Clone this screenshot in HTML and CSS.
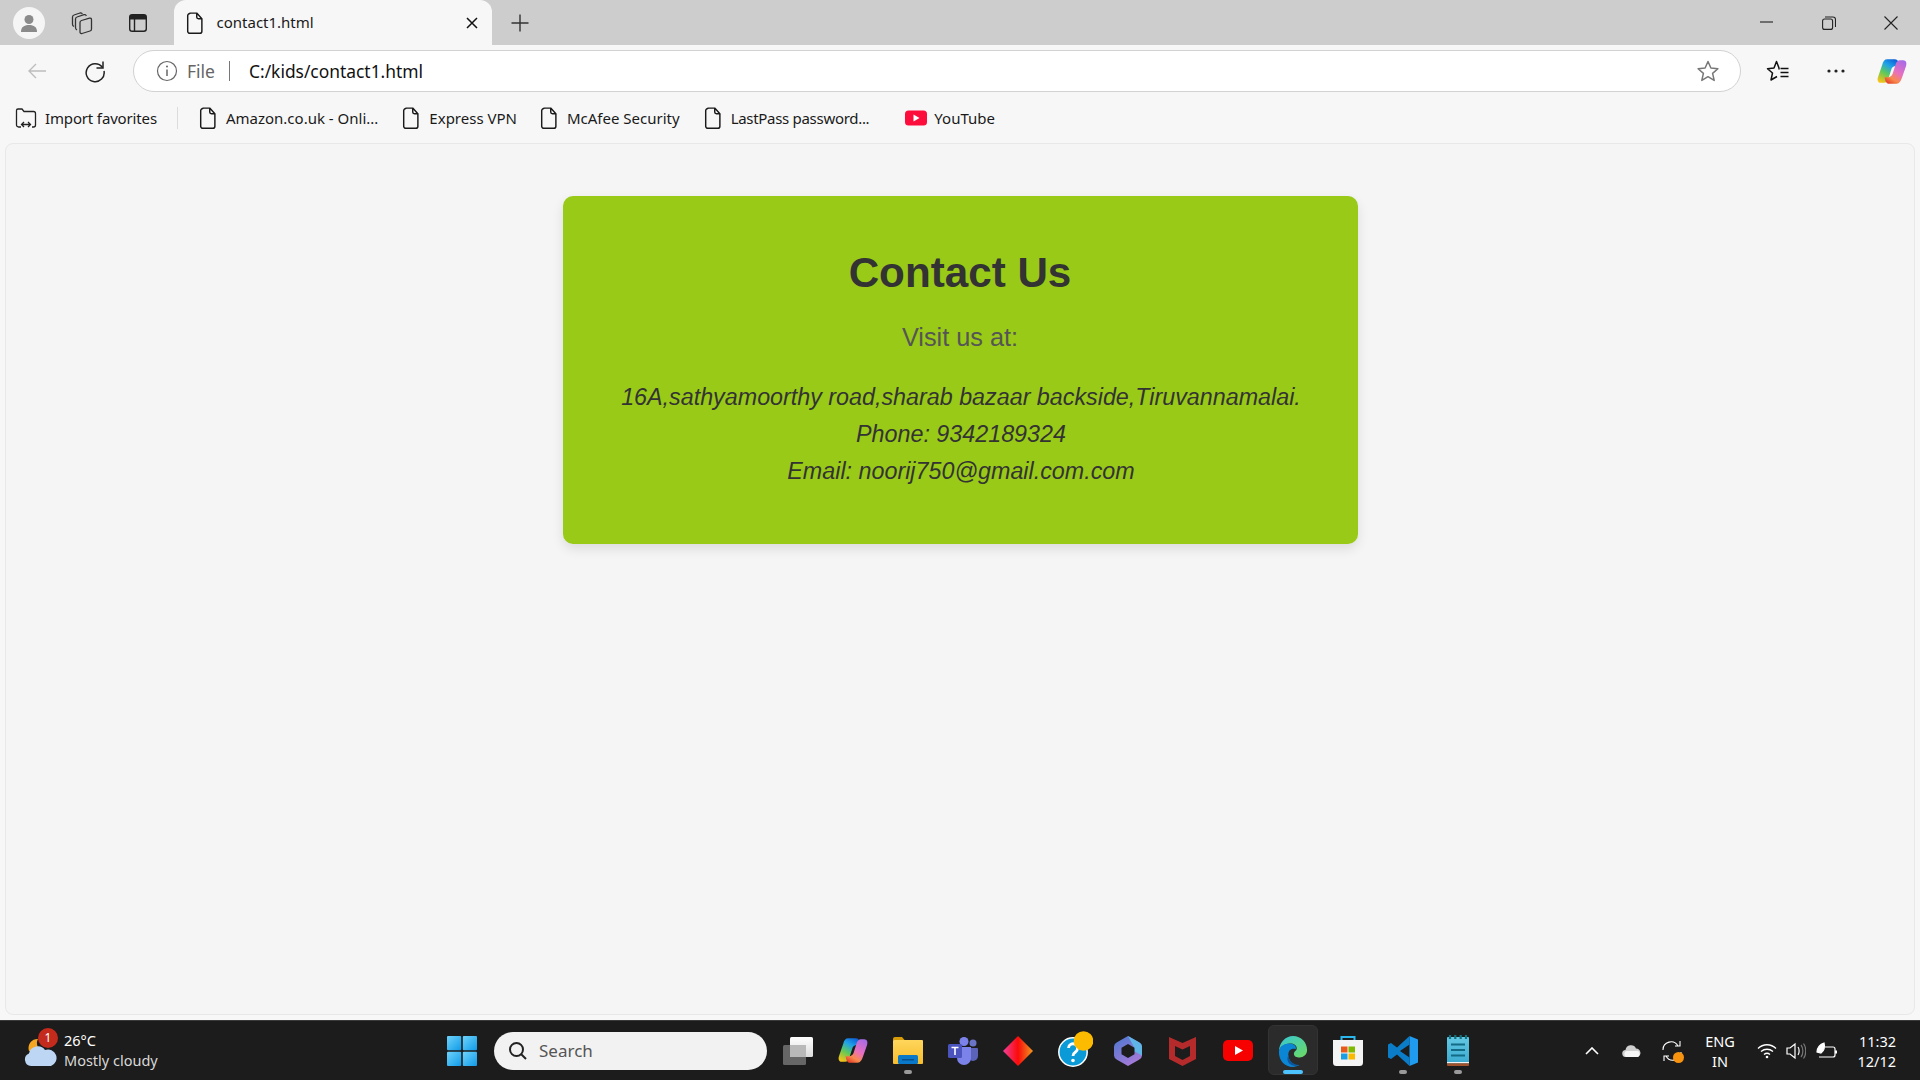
FILE: index.html
```html
<!DOCTYPE html>
<html lang="en">
<head>
<meta charset="utf-8">
<title>contact1.html</title>
<link rel="stylesheet" href="styles.css">
</head>
<body>
<svg class="defs" width="0" height="0" aria-hidden="true">
  <defs>
    <symbol id="file" viewBox="0 0 20 26"><path d="M4 1.5h8l6 6.5v14.500a2.500 2.500 0 0 1-2.500 2.500h-11.500a2.500 2.500 0 0 1-2.500-2.500v-18a2.500 2.500 0 0 1 2.500-2.500zM12 1.500v4.500a2 2 0 0 0 2 2h4" fill="none" stroke="currentColor" stroke-width="1.700" stroke-linejoin="round"/></symbol>
    <linearGradient id="cp" x1=".75" y1="0" x2=".2" y2="1"><stop offset="0" stop-color="#0f62d8"/><stop offset=".3" stop-color="#1fa2e8"/><stop offset=".62" stop-color="#5fc95a"/><stop offset="1" stop-color="#f7c316"/></linearGradient>
    <linearGradient id="cp2" x1=".85" y1="0" x2=".25" y2="1"><stop offset="0" stop-color="#a56be8"/><stop offset=".5" stop-color="#e86fc0"/><stop offset=".8" stop-color="#f88a4c"/><stop offset="1" stop-color="#e8482c"/></linearGradient>
    <symbol id="copilot" viewBox="0 0 32 28"><path d="M11 1h8c2 0 3 1 4 3l1 4h-4c-2 0-3.500 1-4.500 3l-3.500 11c-.7 2-2 4-4.500 4H4c-3 0-4-3-3-6L5.500 7C6.500 3 8 1 11 1z" fill="url(#cp)"/><path d="M21 27h-8c-2 0-3-1-4-3l-1-4h4c2 0 3.500-1 4.500-3l3.500-11c.7-2 2-4 4.500-4H28c3 0 4 3 3 6l-4.500 13c-1 3-2.500 6-5.500 6z" fill="url(#cp2)"/></symbol>
    <linearGradient id="dm" x1="0" y1="0" x2="1" y2="0"><stop offset="0" stop-color="#f0409c"/><stop offset=".5" stop-color="#fb0a0a"/><stop offset="1" stop-color="#f09a20"/></linearGradient>
    <linearGradient id="edge" x1="0" y1="0" x2="1" y2="1"><stop offset="0" stop-color="#36c6d8"/><stop offset="1" stop-color="#6ddc5f"/></linearGradient>
    <linearGradient id="m365" x1="0" y1="0" x2=".6" y2="1"><stop offset="0" stop-color="#4a78d0"/><stop offset="1" stop-color="#a57ad8"/></linearGradient>
    <linearGradient id="fold" x1="0" y1="0" x2="0" y2="1"><stop offset="0" stop-color="#ffd65c"/><stop offset="1" stop-color="#f7bd2c"/></linearGradient>
    <linearGradient id="win" x1="0" y1="0" x2="1" y2="1"><stop offset="0" stop-color="#6fd3fb"/><stop offset="1" stop-color="#0f9be8"/></linearGradient>
    <linearGradient id="tv" x1="0" y1="0" x2="0" y2="1"><stop offset="0" stop-color="#fff"/><stop offset="1" stop-color="#dcdcdc"/></linearGradient>
    <linearGradient id="note" x1="0" y1="0" x2="0" y2="1"><stop offset="0" stop-color="#63c8e4"/><stop offset="1" stop-color="#3aa9cf"/></linearGradient>
  </defs>
</svg>

<div class="browser">
  <header class="tabstrip">
    <span class="avatar"><svg width="22" height="22" viewBox="0 0 22 22"><circle cx="11" cy="7.500" r="4.500" fill="#8a8a8a"/><path d="M3 20c0-5 3-7 8-7s8 2 8 7z" fill="#8a8a8a"/></svg></span>
    <span class="strip-btn collections"><svg width="24" height="24" viewBox="0 0 24 24" fill="none" stroke="#333" stroke-width="1.300" stroke-linejoin="round"><path d="M10 11.500c0-1 .5-1.700 1.500-2l8-2.300c1.200-.3 2 .3 2 1.500V18c0 1-.5 1.700-1.500 2l-8 2.500c-1.200.3-2-.3-2-1.500z"/><path d="M7 19c-1-.5-1.500-1.300-1.500-2.500V8c0-1 .5-1.700 1.500-2l7-2.300c1.200-.3 2 .1 2.300 1.300"/><path d="M4 15.500c-1-.5-1.500-1.200-1.500-2.300V6c0-1 .5-1.700 1.500-2l6-2c1.200-.3 2 .1 2.300 1"/></svg></span>
    <span class="strip-btn tabs-btn"><svg width="22" height="22" viewBox="0 0 22 22"><rect x="2.700" y="2.700" width="16.600" height="16.600" rx="2.500" fill="none" stroke="#222" stroke-width="1.400"/><path d="M2.700 5a2.300 2.300 0 0 1 2.300-2.300h12a2.300 2.300 0 0 1 2.300 2.300v2.500H2.700z" fill="#222"/><path d="M7.500 7v12" stroke="#222" stroke-width="1.400"/></svg></span>
    <div class="tab">
      <svg class="ico-file" width="20" height="26"><use href="#file"/></svg>
      <span class="tab-title">contact1.html</span>
      <svg class="tab-close" width="12" height="12" viewBox="0 0 12 12"><path d="M1 1l10 10M11 1L1 11" stroke="#111" stroke-width="1.500"/></svg>
    </div>
    <svg class="new-tab" width="20" height="20" viewBox="0 0 20 20"><path d="M10 1.500v17M1.500 10h17" stroke="#333" stroke-width="1.400"/></svg>
    <div class="window-controls">
      <svg width="14" height="14" viewBox="0 0 14 14"><path d="M0 6h13" stroke="#222" stroke-width="1.100"/></svg>
      <svg width="14" height="14" viewBox="0 0 14 14" fill="none" stroke="#222" stroke-width="1.100"><rect x=".6" y="3" width="10" height="10.400" rx="2"/><path d="M3 1h8c1.500 0 2.500 1 2.500 2.500v7.500"/></svg>
      <svg width="14" height="14" viewBox="0 0 14 14"><path d="M.5.500l13 13M13.500.500l-13 13" stroke="#222" stroke-width="1.100"/></svg>
    </div>
  </header>

  <div class="toolbar">
    <svg class="tool-back" width="20" height="20" viewBox="0 0 20 20" fill="none" stroke="#bdbdbd" stroke-width="1.400"><path d="M19 10H2M9 3l-7 7 7 7"/></svg>
    <svg class="tool-reload" width="24" height="24" viewBox="0 0 24 24" fill="none" stroke="#222" stroke-width="1.500"><path d="M19.500 8.500A9 9 0 1 0 21 12"/><path d="M20 2.500v6.500h-6.500"/></svg>
    <div class="omnibox">
      <svg class="info" width="22" height="22" viewBox="0 0 22 22" fill="none" stroke="#666" stroke-width="1.200"><circle cx="11" cy="11" r="9.500"/><path d="M11 9.500v6.500" stroke-width="1.500"/><circle cx="11" cy="6.500" r="1" fill="#666" stroke="none"/></svg>
      <span class="scheme">File</span>
      <span class="omni-sep"></span>
      <span class="url">C:/kids/contact1.html</span>
      <svg class="star" width="24" height="24" viewBox="0 0 24 24" fill="none" stroke="#777" stroke-width="1.500" stroke-linejoin="round"><path d="M12 2.500l2.900 6.500 7 .7-5.300 4.700 1.600 7-6.200-3.700-6.200 3.700 1.600-7-5.300-4.700 7-.7z"/></svg>
    </div>
    <svg class="tool-fav" width="24" height="24" viewBox="0 0 24 24" fill="none" stroke="#111" stroke-width="1.500" stroke-linejoin="round"><path d="M13 10.500V9l-2.500-6.500L8 9l-6.500.7 5 4.300-1.500 7L11 17.500"/><path d="M14.500 9.500h8M14.500 13.500h8M14.500 17.500h8"/></svg>
    <svg class="tool-more" width="18" height="6" viewBox="0 0 18 6" fill="#222"><circle cx="2" cy="3" r="1.600"/><circle cx="9" cy="3" r="1.600"/><circle cx="16" cy="3" r="1.600"/></svg>
    <svg class="tool-copilot" width="30" height="27"><use href="#copilot"/></svg>
  </div>

  <nav class="bookmarks">
    <span class="bm bm-import"><svg width="22" height="22" viewBox="0 0 22 22" fill="none" stroke="#222" stroke-width="1.300"><path d="M6 20H3.500A2 2 0 0 1 1.500 18V3.500A1.500 1.500 0 0 1 3 2h4l2 2.500h9.500a2 2 0 0 1 2 2V18a2 2 0 0 1-2 2H17"/><path d="M7 17.500h8M9 15l-2.500 2.500L9 20M13 15l2.500 2.500L13 20"/></svg>Import favorites</span>
    <span class="bm-sep"></span>
    <span class="bm bm-amazon"><svg class="ico-file" width="20" height="26"><use href="#file"/></svg>Amazon.co.uk - Onli...</span>
    <span class="bm bm-express"><svg class="ico-file" width="20" height="26"><use href="#file"/></svg>Express VPN</span>
    <span class="bm bm-mcafee"><svg class="ico-file" width="20" height="26"><use href="#file"/></svg>McAfee Security</span>
    <span class="bm bm-lastpass"><svg class="ico-file" width="20" height="26"><use href="#file"/></svg>LastPass password...</span>
    <span class="bm bm-youtube"><svg width="22" height="16" viewBox="0 0 22 16"><rect width="22" height="15" y=".5" rx="3.500" fill="#fd0d3c"/><path d="M8.500 4.500l6 3.500-6 3.500z" fill="#fff"/></svg>YouTube</span>
  </nav>

  <main class="viewport">
    <section class="card">
      <h1 class="card-title">Contact Us</h1>
      <p class="card-lead">Visit us at:</p>
      <address class="card-address">
        <p>16A,sathyamoorthy road,sharab bazaar backside,Tiruvannamalai.</p>
        <p>Phone: 9342189324</p>
        <p>Email: noorij750@gmail.com.com</p>
      </address>
    </section>
  </main>
</div>

<footer class="taskbar">
  <div class="weather">
    <span class="weather-icon">
      <svg width="34" height="36" viewBox="0 0 34 36"><path d="M6 18a9 9 0 0 1 9-12 8 8 0 0 0 6 12z" fill="#f5a623"/><path d="M8 33a6.500 6.500 0 0 1-2-12.500A9 9 0 0 1 22 17a7.500 7.500 0 0 1 6 16z" fill="#bcd6f4"/></svg>
      <span class="badge">1</span>
    </span>
    <span class="weather-text"><span class="temp">26°C</span><span class="cond">Mostly cloudy</span></span>
  </div>
  <div class="apps">
    <span class="app start"><svg width="30" height="30" viewBox="0 0 30 30" fill="url(#win)"><rect width="14.200" height="14.200" rx="1"/><rect x="15.800" width="14.200" height="14.200" rx="1"/><rect y="15.800" width="14.200" height="14.200" rx="1"/><rect x="15.800" y="15.800" width="14.200" height="14.200" rx="1"/></svg></span>
    <label class="search"><svg width="20" height="20" viewBox="0 0 20 20" fill="none" stroke="#222" stroke-width="2"><circle cx="8.500" cy="8.500" r="6.500"/><path d="M13 13l5 5"/></svg><span>Search</span></label>
    <span class="app"><svg width="30" height="28" viewBox="0 0 30 28"><rect y="8" width="23" height="20" rx="1.500" fill="#666"/><rect x="7" width="23" height="20" rx="1.500" fill="url(#tv)"/><rect x="7" y="8" width="16" height="12" fill="#b9b9b9"/></svg></span>
    <span class="app"><svg width="30" height="27"><use href="#copilot"/></svg></span>
    <span class="app running"><svg width="30" height="27" viewBox="0 0 30 27"><path d="M0 2a2 2 0 0 1 2-2h7l3 3.500H0z" fill="#d89c08"/><rect y="3" width="30" height="24" rx="1" fill="url(#fold)"/><rect x="5" y="18" width="20" height="9" rx="1.500" fill="#0a78c8"/><rect x="9" y="22" width="12" height="1.500" fill="#04508c"/></svg></span>
    <span class="app"><svg width="30" height="28" viewBox="0 0 30 28"><circle cx="25" cy="6" r="3.500" fill="#6a75c9"/><path d="M20 11h9a1 1 0 0 1 1 1v7a5 5 0 0 1-10 0z" fill="#5a63b8"/><circle cx="16" cy="4.500" r="4.500" fill="#7b83eb"/><path d="M9 10h14v11a7 7 0 0 1-14 0z" fill="#7b83eb"/><rect y="7" width="14" height="14" rx="1.500" fill="#4b53bc"/><path d="M3.500 10.500h7M7 10.500v7.500" stroke="#fff" stroke-width="1.600"/></svg></span>
    <span class="app"><svg width="30" height="30" viewBox="0 0 30 30"><path d="M15 0l15 15-15 15L0 15z" fill="url(#dm)"/></svg></span>
    <span class="app"><svg class="help" width="40" height="44" viewBox="0 0 40 44"><circle cx="20" cy="25" r="14.200" fill="#0a9ad8" stroke="#fff" stroke-width="1.500"/><path d="M15.500 21a4.500 4.500 0 1 1 7 4c-1.500 1-2.500 2-2.500 4" fill="none" stroke="#fff" stroke-width="2.800"/><circle cx="20" cy="33.500" r="1.800" fill="#fff"/><circle cx="30.500" cy="14" r="9.800" fill="#fdbb00"/></svg></span>
    <span class="app"><svg width="28" height="30" viewBox="0 0 28 30"><path d="M14 0l11 6.200a5 5 0 0 1 3 4.300v9a5 5 0 0 1-3 4.300L14 30 3 23.800a5 5 0 0 1-3-4.300v-9a5 5 0 0 1 3-4.300z" fill="url(#m365)"/><path d="M14 0l11 6.200a5 5 0 0 1 3 4.300v9L20 15v-4z" fill="#5fb6e6"/><path d="M14 8l6.500 3.700v6.600L14 22l-6.500-3.700v-6.600z" fill="#1c1c1c"/></svg></span>
    <span class="app"><svg width="27" height="30" viewBox="0 0 27 30"><path d="M0 1l13.500 6L27 1v22l-13.500 7L0 23z" fill="#b52b2b"/><path d="M6 10l7.500 3.500L21 10v10l-7.500 4L6 20z" fill="#1c1c1c"/></svg></span>
    <span class="app"><svg width="30" height="21" viewBox="0 0 30 21"><rect width="30" height="21" rx="5" fill="#f60000"/><path d="M12 6l8 4.500-8 4.500z" fill="#fff"/></svg></span>
    <span class="app active"><svg width="30" height="32" viewBox="0 0 32 34"><path d="M1 18C1 8 8 1 16 1c9 0 15 7 15 15 0 5-4 8-8 8-3 0-6-1-6-4 0-3 3-3 3-6 0-3-3-5-7-5-7 0-12 5-12 9z" fill="url(#edge)"/><path d="M1 18c0-6 6-9 11-9 5 0 8 3 7 6-3-1-8 0-8 6 0 6 5 12 12 11-2 1-5 2-7 2-9 0-15-7-15-16z" fill="#0b86d4"/><path d="M11 21c0 6 5 11 12 11-6 2.500-13-.5-13-7z" fill="#0c569c"/></svg></span>
    <span class="app"><svg width="30" height="30" viewBox="0 0 30 30"><path d="M8.500 5V1h13v4" fill="none" stroke="#2ab7ee" stroke-width="2"/><path d="M0 4h30v22.500a3.500 3.500 0 0 1-3.500 3.500h-23A3.500 3.500 0 0 1 0 26.500z" fill="#f4f4f4"/><rect x="8" y="10.500" width="6.500" height="6" fill="#e85a1b"/><rect x="15.500" y="10.500" width="6.500" height="6" fill="#7fb900"/><rect x="8" y="17.500" width="6.500" height="6" fill="#1a9fe5"/><rect x="15.500" y="17.500" width="6.500" height="6" fill="#fbb900"/></svg></span>
    <span class="app running"><svg width="30" height="30" viewBox="0 0 30 30"><path d="M21.500 0l8.500 3.500v23L21.500 30z" fill="#1f9cf0"/><path d="M21.500 0v8.500L12 15l9.500 6.500V30L9 18.500 3 23l-3-1.500v-13L3 7l6 4.500z" fill="#0a7cc8"/></svg></span>
    <span class="app running"><svg width="22" height="31" viewBox="0 0 22 31"><rect y="2" width="22" height="27" rx="1" fill="url(#note)"/><rect y="27" width="22" height="1.200" fill="#f2f2f2"/><rect y="28.200" width="22" height="2.800" rx="1" fill="#a0522d"/><path d="M3 0v4M8.300 0v4M13.700 0v4M19 0v4" stroke="#12717f" stroke-width="2.200"/><path d="M4 9.500h14M4 15h14M4 20.500h14" stroke="#126a85" stroke-width="2.200"/></svg></span>
  </div>
  <div class="tray">
    <svg class="t-chevron" width="14" height="8" viewBox="0 0 14 8"><path d="M1 7l6-6 6 6" fill="none" stroke="#fff" stroke-width="1.600"/></svg>
    <svg class="t-cloud" width="20" height="13" viewBox="0 0 20 13"><path d="M4 13a3.500 3.500 0 0 1-.5-7A5.500 5.500 0 0 1 14 4.500 4.500 4.500 0 0 1 16 13z" fill="#cfcfcf"/><path d="M4 13a3.500 3.500 0 0 1 0-6h12a3.500 3.500 0 0 1 0 6z" fill="#f5f5f5"/></svg>
    <span class="t-sync"><svg width="20" height="22" viewBox="0 0 20 22" fill="none" stroke="#fff" stroke-width="1.100"><path d="M1 10a8 8 0 0 1 15-4M18 1v5h-5"/><path d="M19 12a8 8 0 0 1-15 4M2 21v-5h5"/></svg><i class="dot"></i></span>
    <span class="t-lang"><span>ENG</span><span>IN</span></span>
    <svg class="t-wifi" width="20" height="16" viewBox="0 0 20 16" fill="none" stroke="#fff" stroke-width="1.300"><path d="M1 5.500c5-5 13-5 18 0M4 8.500c3.500-3 8.500-3 12 0M7 11.500c1.800-1.500 4.200-1.500 6 0"/><circle cx="10" cy="14" r="1.300" fill="#fff" stroke="none"/></svg>
    <svg class="t-vol" width="20" height="18" viewBox="0 0 20 18" fill="none" stroke="#fff" stroke-width="1.200"><path d="M1 6v6h3l5 4V2L4 6z"/><path d="M12 5c1.500 2 1.500 6 0 8"/><path d="M15 3c2.500 3 2.500 9 0 12M17.500 1.500c3 4 3 11 0 15" stroke="#777"/></svg>
    <svg class="t-batt" width="22" height="18" viewBox="0 0 22 18" fill="none" stroke="#fff" stroke-width="1.200"><path d="M1 10c0-4 3-8 7-9 1 4 0 8-3 10z" fill="#fff"/><path d="M9 5h8a2 2 0 0 1 2 2v6a2 2 0 0 1-2 2H3"/><path d="M20 8.500v3" stroke-width="2"/></svg>
    <span class="t-clock"><span>11:32</span><span>12/12</span></span>
  </div>
</footer>
</body>
</html>
```

FILE: styles.css
```css
* { box-sizing: border-box; }
html, body { margin: 0; height: 100%; }
body {
  width: 1920px;
  height: 1080px;
  overflow: hidden;
  display: flex;
  flex-direction: column;
  background: #f7f7f7;
  font-family: "Noto Sans", "Open Sans", sans-serif;
  color: #1a1a1a;
}
svg { display: block; flex: none; }
.defs { position: absolute; }

.browser { flex: 1; display: flex; flex-direction: column; min-height: 0; }
.ico-file { transform: scale(.86); }

/* Tab strip */
.tabstrip {
  height: 45px;
  flex: none;
  display: flex;
  align-items: center;
  background: #cdcdcd;
  padding-left: 13px;
}
.avatar {
  width: 32px;
  height: 32px;
  border-radius: 50%;
  background: #f5f5f5;
  display: flex;
  align-items: center;
  justify-content: center;
}
.strip-btn { display: flex; }
.collections { margin-left: 25px; }
.tabs-btn { margin-left: 33px; }
.tab {
  width: 318.500px;
  height: 45px;
  margin-left: 24.500px;
  padding: 0 14px 0 11px;
  display: flex;
  align-items: center;
  background: #f7f7f7;
  border-radius: 12px 12px 0 0;
}
.tab-title { margin: 0 0 1px 12px; font-size: 15px; flex: 1; }
.new-tab { margin-left: 18px; }
.window-controls {
  margin: 0 22px 0 auto;
  display: flex;
  align-items: center;
  gap: 48px;
}

/* Toolbar */
.toolbar {
  height: 52px;
  flex: none;
  display: flex;
  align-items: center;
  padding-left: 27px;
}
.tool-reload { margin-left: 36px; }
.omnibox {
  width: 1607.500px;
  height: 42px;
  margin-left: 26px;
  display: flex;
  align-items: center;
  background: #fff;
  border: 1.500px solid #d2d2d2;
  border-radius: 21px;
  padding: 0 20px 0 22px;
}
.scheme { margin-left: 9px; font-size: 17.500px; color: #666; }
.omni-sep { width: 1px; height: 20px; background: #777; margin-left: 14.500px; }
.url { margin-left: 18.500px; font-size: 17.400px; color: #111; flex: 1; }
.tool-fav { margin-left: 25px; }
.tool-more { margin-left: 37px; }
.tool-copilot { margin-left: 32px; }

/* Bookmarks */
.bookmarks {
  height: 46px;
  flex: none;
  display: flex;
  align-items: center;
  padding: 0 0 4px 15px;
  font-size: 15px;
}
.bm { display: flex; align-items: center; gap: 8px; white-space: nowrap; }
.bm-import { letter-spacing: -.15px; }
.bm-sep { width: 1px; height: 22px; background: #dcdcdc; margin-left: 20px; }
.bm-amazon { margin-left: 20px; }
.bm-express { margin-left: 23px; }
.bm-mcafee { margin-left: 22px; }
.bm-lastpass { margin-left: 23px; letter-spacing: -.3px; }
.bm-youtube { margin-left: 36px; gap: 7px; }

/* Page */
.viewport {
  flex: 1;
  margin: 0 5px 5px;
  background: #f5f5f5;
  border: 1px solid #e8e8e8;
  border-radius: 8px;
  display: flex;
  flex-direction: column;
  align-items: center;
  padding-top: 52px;
  font-family: "Liberation Sans", Arial, sans-serif;
}
.card {
  width: 795px;
  height: 348px;
  background: #99ca18;
  border-radius: 10px;
  box-shadow: 0 5px 12px rgba(0, 0, 0, .1);
  padding-top: 51px;
  text-align: center;
  color: #333;
}
.card-title { margin: 0; font-size: 42.200px; line-height: 52px; font-weight: 700; }
.card-lead { margin: 22px 0 0; font-size: 25.300px; line-height: 32px; color: #555; }
.card-address { margin-top: 25.500px; padding-left: 2px; font-style: italic; font-size: 23.300px; line-height: 37px; }
.card-address p { margin: 0; }

/* Taskbar */
.taskbar {
  height: 60px;
  flex: none;
  display: flex;
  align-items: center;
  background: #1c1c1c;
  border-top: 1px solid #3a3a3a;
  color: #fff;
  position: relative;
}
.weather { width: 434px; display: flex; align-items: center; padding-left: 23px; }
.weather-icon { position: relative; display: block; width: 34px; height: 36px; }
.badge {
  position: absolute;
  left: 15px;
  top: -5px;
  width: 20px;
  height: 20px;
  border-radius: 50%;
  background: #c42b1c;
  font-size: 12px;
  line-height: 20px;
  text-align: center;
}
.weather-text { margin: 0 0 2px 7px; display: flex; flex-direction: column; font-size: 14.500px; line-height: 20px; }
.cond { color: #d8d8d8; }
.apps { display: flex; align-items: center; height: 100%; }
.app {
  width: 55px;
  height: 100%;
  display: flex;
  align-items: center;
  justify-content: center;
  position: relative;
}
.running::after, .active::after {
  content: "";
  position: absolute;
  bottom: 6px;
  left: 50%;
  width: 8px;
  height: 4px;
  margin-left: -4px;
  border-radius: 2px;
  background: #9a9a9a;
}
.active::before {
  content: "";
  position: absolute;
  inset: 4px 2.500px 5px;
  background: #2b2b2b;
  border-radius: 6px;
  border: 1px solid #333;
}
.active svg { position: relative; }
.active::after { width: 20px; margin-left: -10px; background: #4cc2ff; }
.help { margin-bottom: 4px; }
.search {
  width: 273px;
  height: 38px;
  margin: 0 3px 0 5px;
  background: #f2f2f2;
  border-radius: 19px;
  display: flex;
  align-items: center;
  gap: 11px;
  padding-left: 14px;
  color: #555;
  font-size: 17px;
}
.tray { position: absolute; inset: 0 0 0 auto; width: 340px; display: flex; align-items: center; }
.t-chevron { margin-left: 5px; }
.t-cloud { margin-left: 23px; }
.t-sync { position: relative; display: block; margin-left: 20px; }
.dot { position: absolute; right: -2px; bottom: -1px; width: 11px; height: 11px; border-radius: 50%; background: #f7930e; }
.t-lang { margin-left: 18px; display: flex; flex-direction: column; align-items: center; font-size: 14.500px; line-height: 20px; width: 40px; }
.t-wifi { margin-left: 17px; }
.t-vol { margin-left: 9px; }
.t-batt { margin-left: 10px; }
.t-clock { margin: 0 24px 0 auto; display: flex; flex-direction: column; align-items: flex-end; font-size: 14.500px; line-height: 20px; }
```
